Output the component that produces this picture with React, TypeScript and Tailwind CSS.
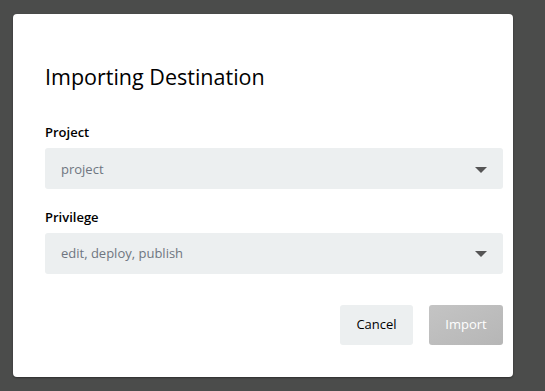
export default function App() {
  return (
    <div className="h-[391px] w-[545px] overflow-hidden bg-[#4b4c4b] pl-[13px] pt-[14px] font-['Segoe_UI','Open_Sans',sans-serif]">
      <div className="flex h-[363px] w-[500px] flex-col rounded-[4px] bg-white px-[32px] pt-[48px] shadow-[0_1px_2px_rgba(0,0,0,0.4)]">
        <h1 className="text-[21.5px] leading-[30px] font-normal text-black">Importing Destination</h1>

        <div className="mt-[31px] flex flex-col">
          <label className="text-[13px] leading-[18px] font-[550] text-black">Project</label>
          <div className="mt-[7px] flex h-[41px] w-[458px] items-center justify-between rounded-[3px] bg-[#eceff0] pl-[16px] pr-[16px] pt-[2px]">
            <span className="text-[13px] text-[#6f7680]">project</span>
            <span className="h-0 w-0 border-x-[6px] border-t-[6px] border-x-transparent border-t-[#555]" />
          </div>
        </div>

        <div className="mt-[19px] flex flex-col">
          <label className="text-[13px] leading-[18px] font-[550] text-black">Privilege</label>
          <div className="mt-[7px] flex h-[41px] w-[458px] items-center justify-between rounded-[3px] bg-[#eceff0] pl-[16px] pr-[16px] pt-[1px]">
            <span className="text-[13px] text-[#6f7680]">edit, deploy, publish</span>
            <span className="h-0 w-0 border-x-[6px] border-t-[6px] border-x-transparent border-t-[#555]" />
          </div>
        </div>

        <div className="mt-[31px] flex w-[458px] justify-end gap-[16px]">
          <button className="h-[40px] w-[73px] rounded-[3px] bg-[#eceff0] text-[13px] text-black">Cancel</button>
          <button className="h-[40px] w-[74px] rounded-[3px] bg-gradient-to-br from-[#c4c4c4] to-[#b6b6b6] text-[13px] font-medium text-white">
            Import
          </button>
        </div>
      </div>
    </div>
  );
}
